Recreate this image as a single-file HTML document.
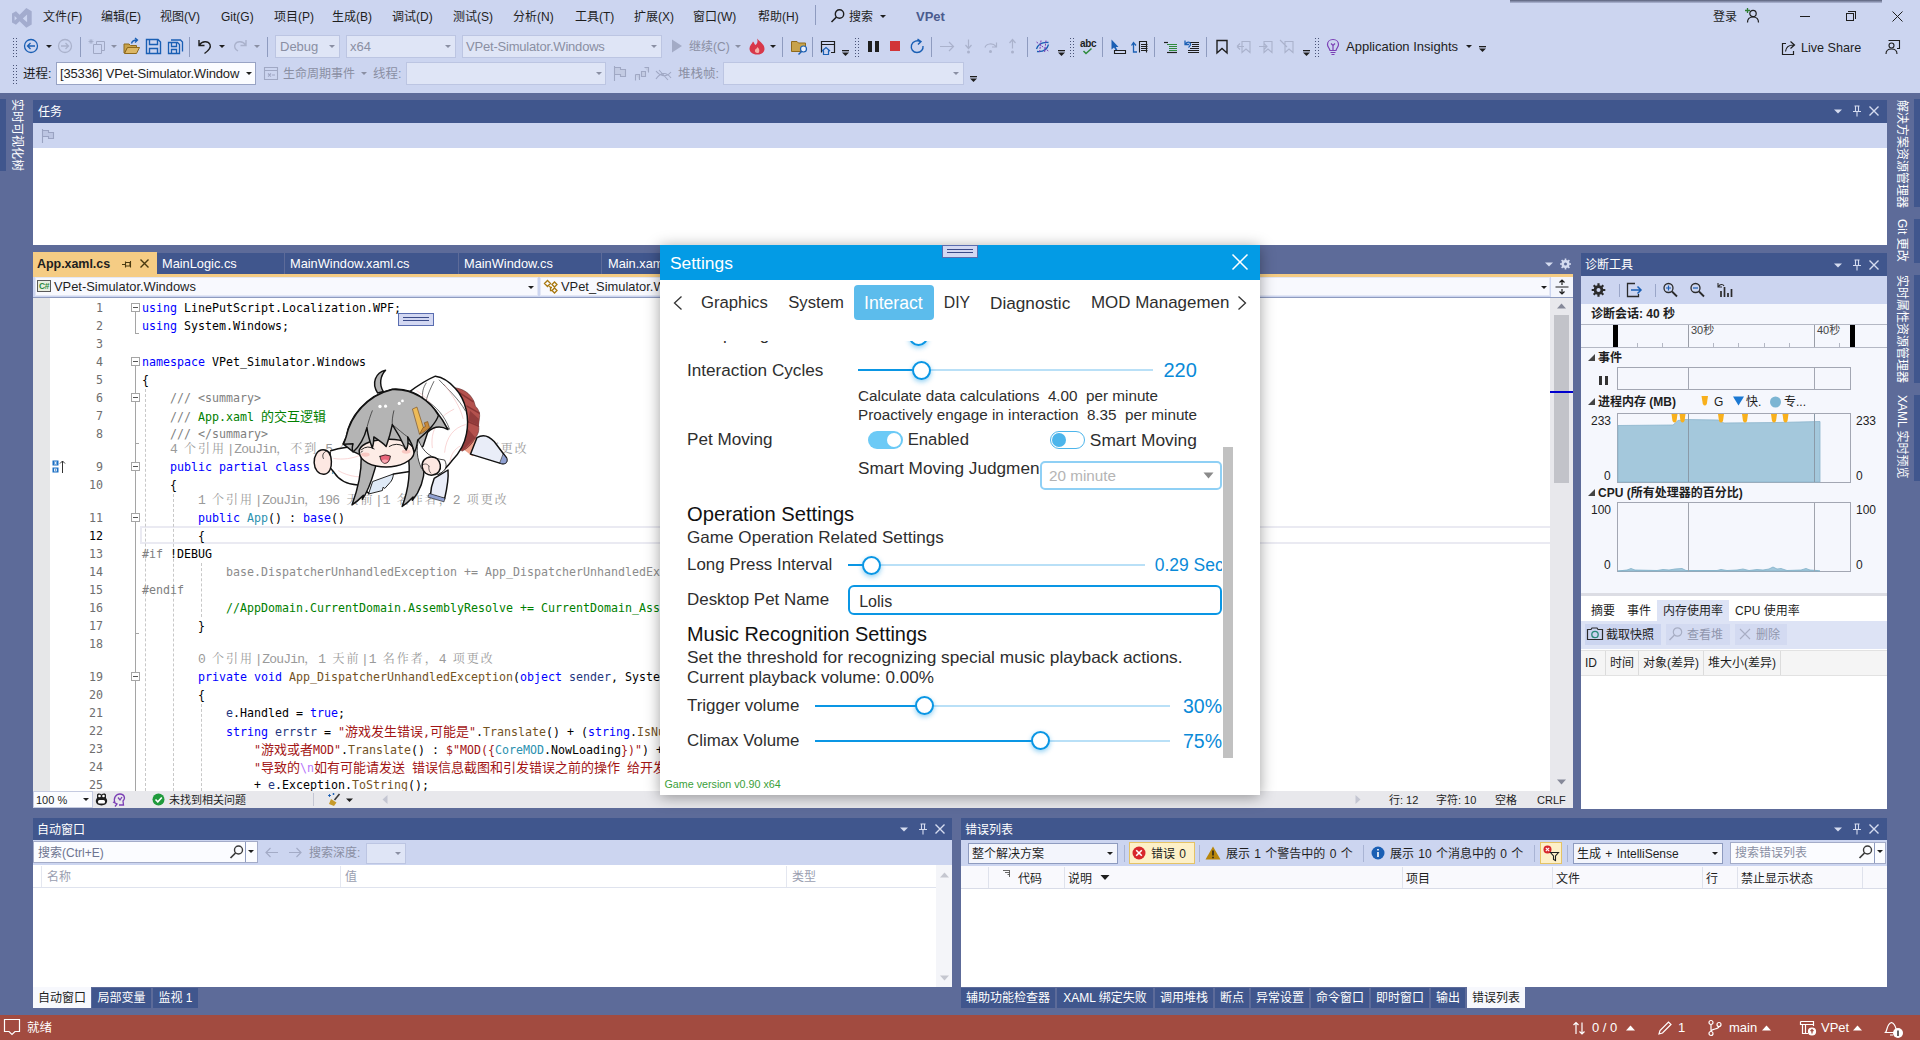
<!DOCTYPE html>
<html lang="zh-CN">
<head>
<meta charset="utf-8">
<title>VPet - Visual Studio</title>
<style>
*{box-sizing:border-box;margin:0;padding:0}
html,body{width:1920px;height:1040px;overflow:hidden}
body{position:relative;background:#5d6b99;font-family:"Liberation Sans","Noto Sans CJK SC",sans-serif;font-size:12px;color:#1e1e1e;line-height:1}
.a{position:absolute}
.t{position:absolute;white-space:nowrap;line-height:16px;height:16px}
.w{color:#fff}
.g{color:#8a8fa3}
/* top chrome */
#chrome{left:0;top:0;width:1920px;height:93px;background:#ccd5f0}
.menu{top:9px;font-size:12px}
.sep{position:absolute;width:1px;background:#8e9bbf}
.combo{position:absolute;background:#f3f5fc;border:1px solid #a9b4d4}
.combo.dis{background:#dfe5f6;border-color:#bcc5e2}
.arr{position:absolute;width:0;height:0;border-left:3px solid transparent;border-right:3px solid transparent;border-top:3px solid #1e1e1e}
.arr.gr{border-top-color:#8a8fa3}
.grip{position:absolute;width:3px;background-image:radial-gradient(circle,#4a5478 0.7px,transparent 0.9px);background-size:3px 3px}
/* panels */
.ttl{position:absolute;background:#40568d;color:#fff;height:22px}
.ttl .t{top:3px;left:5px;color:#fff}
.tb{position:absolute;background:#ccd5f0}
.white{position:absolute;background:#fff}
/* code */
.ln,.cd,.cl{position:absolute;white-space:pre;font-family:"DejaVu Sans Mono","Liberation Mono","Noto Sans CJK SC",monospace;font-size:11.63px;line-height:18px;height:18px}
.ln{left:0;width:70px;text-align:right;color:#2b91af;color:#6e6e6e}
.cd{left:109px;color:#000}
.cl{color:#9a9a9a;font-family:"Liberation Mono","Noto Serif CJK SC",monospace;font-size:13px;letter-spacing:-.8px;line-height:15px;height:15px}
.k{color:#0000ff}.ty{color:#2b91af}.s{color:#a31515}.c{color:#008000}.x{color:#808080}.p{color:#808080}.m{color:#74531f}.e{color:#b776fb}.gy{color:#8c8c8c}
.cd i,.cl i{font-style:normal}.cd b.z{font-weight:normal;font-family:"Noto Sans CJK SC",sans-serif;font-size:13px;letter-spacing:0}.cl b.z{font-weight:normal;font-family:"Noto Serif CJK SC",serif;font-size:12px;letter-spacing:2px}
.cl i.br{margin:0 .65px}
.ob{position:absolute;width:9px;height:9px;border:1px solid #a5a5a5;background:#fff}
.ob:after{content:"";position:absolute;left:1px;top:3px;width:5px;height:1px;background:#555}
.vl{position:absolute;width:1px;background:#a5a5a5}
.dl{position:absolute;width:0;border-left:1px dashed #c8c8c8}
/* tabs bottom */
.bt{position:absolute;top:988px;height:20px;background:#40568d;color:#fff;line-height:20px;text-align:center;white-space:nowrap}
.bt.on{background:#f7f8fd;color:#1e1e1e;top:987px;height:21px;line-height:22px}
/* status */
#status{left:0;top:1015px;width:1920px;height:25px;background:#a24b40;color:#fff}
#status .t{color:#fff;font-size:13px;top:5px}
/* dialog */
#dlg{left:660px;top:245px;width:600px;height:550px;background:#fff;box-shadow:0 2px 14px rgba(0,0,0,.38);font-family:"Liberation Sans",sans-serif;color:#222;overflow:hidden}
#dlg .t{font-size:16.5px;line-height:20px;height:20px;color:#2e2e2e}
#dlg .b{color:#0a8ad8}
.trk{position:absolute;height:2px;background:#b9e0f7}
.trk i{position:absolute;left:0;top:0;height:2px;background:#0a96e4;display:block}
.knob{position:absolute;width:19px;height:19px;border-radius:50%;border:2px solid #0a96e4;background:#fff;box-shadow:0 2px 5px rgba(10,150,228,.45)}
</style>
</head>
<body>
<div id="chrome" class="a">
<!-- VS logo -->
<svg class="a" style="left:0;top:0" width="40" height="32" viewBox="0 0 40 32"><path d="M26.300 8 L31.700 11.200 V24.600 L26.300 27.800 L19.600 21.200 L16 24.800 L12 22.600 V13.400 L16 11.200 L19.600 14.800 Z M27.100 14.600 V22.200 L22.800 18.400 Z M14.600 16 V20.600 L17 18.300 Z" fill="#a3acce" fill-rule="evenodd"/></svg>
<span class="t menu" style="left:43px">文件(F)</span>
<span class="t menu" style="left:101px">编辑(E)</span>
<span class="t menu" style="left:160px">视图(V)</span>
<span class="t menu" style="left:221px">Git(G)</span>
<span class="t menu" style="left:274px">项目(P)</span>
<span class="t menu" style="left:332px">生成(B)</span>
<span class="t menu" style="left:392px">调试(D)</span>
<span class="t menu" style="left:453px">测试(S)</span>
<span class="t menu" style="left:513px">分析(N)</span>
<span class="t menu" style="left:575px">工具(T)</span>
<span class="t menu" style="left:634px">扩展(X)</span>
<span class="t menu" style="left:693px">窗口(W)</span>
<span class="t menu" style="left:758px">帮助(H)</span>
<div class="sep" style="left:815px;top:5px;height:20px"></div>
<svg class="a" style="left:830px;top:8px" width="16" height="16" viewBox="0 0 16 16"><circle cx="9.5" cy="6" r="4.2" fill="none" stroke="#1e1e1e" stroke-width="1.4"/><path d="M6.5 9 L1.5 14" stroke="#1e1e1e" stroke-width="1.6"/></svg>
<span class="t menu" style="left:849px">搜索</span>
<div class="arr" style="left:880px;top:15px"></div>
<span class="t" style="left:916px;top:9px;font-size:13px;font-weight:bold;color:#4a5b8e">VPet</span>
<div class="a" style="left:1510px;top:0;width:372px;height:3px;background:linear-gradient(#59607a,rgba(160,168,200,.6))"></div>
<span class="t menu" style="left:1713px">登录</span>
<svg class="a" style="left:1744px;top:7px" width="17" height="17" viewBox="0 0 17 17"><circle cx="9" cy="6.5" r="3.2" fill="none" stroke="#1e1e1e" stroke-width="1.2"/><path d="M3.5 15.5 C3.5 11 6 10 9 10 C12 10 14.500 11 14.500 15.5" fill="none" stroke="#1e1e1e" stroke-width="1.2"/><path d="M1 3.500 H6 M3.500 1 V6" stroke="#2e7d32" stroke-width="1.3"/></svg>
<div class="a" style="left:1800px;top:16px;width:10px;height:1px;background:#1e1e1e"></div>
<div class="a" style="left:1846px;top:13px;width:8px;height:8px;border:1px solid #1e1e1e"></div>
<div class="a" style="left:1848px;top:11px;width:8px;height:8px;border:1px solid #1e1e1e;border-left:none;border-bottom:none"></div>
<svg class="a" style="left:1892px;top:11px" width="11" height="11" viewBox="0 0 11 11"><path d="M0.500 0.500 L10.500 10.500 M10.500 0.500 L0.500 10.500" stroke="#1e1e1e" stroke-width="1"/></svg>
<div class="grip" style="left:12px;top:37px;height:20px;width:5px"></div>
<div class="grip" style="left:12px;top:64px;height:20px;width:5px"></div>
<div class="grip" style="left:854px;top:37px;height:20px;width:5px"></div>
<div class="grip" style="left:1069px;top:37px;height:20px;width:5px"></div>
<div class="grip" style="left:1314px;top:37px;height:20px;width:5px"></div>
<div class="sep" style="left:80px;top:37px;height:20px"></div>
<div class="sep" style="left:189px;top:37px;height:20px"></div>
<div class="sep" style="left:267px;top:37px;height:20px"></div>
<div class="sep" style="left:782px;top:37px;height:20px"></div>
<div class="sep" style="left:812px;top:37px;height:20px"></div>
<div class="sep" style="left:931px;top:37px;height:20px"></div>
<div class="sep" style="left:1027px;top:37px;height:20px"></div>
<div class="sep" style="left:1102px;top:37px;height:20px"></div>
<div class="sep" style="left:1154px;top:37px;height:20px"></div>
<div class="sep" style="left:1206px;top:37px;height:20px"></div>
<div class="combo dis" style="left:275px;top:35px;width:65px;height:23px"></div>
<span class="t g" style="left:280px;top:39px;font-size:13px">Debug</span><div class="arr gr" style="left:329px;top:45px"></div>
<div class="combo dis" style="left:346px;top:35px;width:110px;height:23px"></div>
<span class="t g" style="left:350px;top:39px;font-size:13px">x64</span><div class="arr gr" style="left:445px;top:45px"></div>
<div class="combo dis" style="left:462px;top:35px;width:200px;height:23px"></div>
<span class="t g" style="left:466px;top:39px;font-size:13px;letter-spacing:-.2px">VPet-Simulator.Windows</span><div class="arr gr" style="left:651px;top:45px"></div>
<span class="t g" style="left:689px;top:39px;font-size:12px">继续(C)</span><div class="arr gr" style="left:735px;top:45px"></div>
<div class="arr" style="left:46px;top:45px"></div>
<div class="arr gr" style="left:111px;top:45px"></div>
<div class="arr" style="left:219px;top:45px"></div>
<div class="arr gr" style="left:254px;top:45px"></div>
<div class="arr" style="left:770px;top:45px"></div>
<span class="t" style="left:1346px;top:39px;font-size:13px">Application Insights</span><div class="arr" style="left:1466px;top:45px"></div>
<span class="t" style="left:1801px;top:40px;font-size:12.6px">Live Share</span>
<svg class="a" style="left:0;top:30px" width="1920" height="63" viewBox="0 30 1920 63" fill="none" stroke-linecap="butt">
<!-- back / forward -->
<circle cx="31" cy="46" r="6.500" stroke="#1a5fb4" stroke-width="1.3"/><path d="M35 46 H27.500 M30.500 43 L27.500 46 L30.500 49" stroke="#1a5fb4" stroke-width="1.3"/>
<circle cx="65" cy="46" r="6.500" stroke="#aab2cc" stroke-width="1.3"/><path d="M61 46 H68.500 M65.500 43 L68.500 46 L65.500 49" stroke="#aab2cc" stroke-width="1.3"/>
<!-- new item gray -->
<path d="M93.500 44.500 H101.500 V53.500 H93.500 Z M96.500 44 V41.500 H104.500 V50.500 H102" stroke="#a0a8c4" stroke-width="1"/><path d="M91 39 V44 M88.500 41.500 H93.500 M89.300 39.700 L92.700 43.300 M92.700 39.700 L89.300 43.300" stroke="#a0a8c4" stroke-width=".8"/>
<!-- open folder -->
<path d="M124 44 H129 L130.500 45.500 H136.500 V47.500 H127.500 L124.500 53 H124 Z" fill="#c8a24a" stroke="#8f6a1c" stroke-width="1"/><path d="M127.500 47.500 H139.500 L136.500 53.500 H124.500 Z" fill="#dcb765" stroke="#8f6a1c" stroke-width="1"/><path d="M131.500 43.500 C132 41 134 40 137 40 M135 38 L137.500 40 L135 42.500" stroke="#1a5fb4" stroke-width="1.3"/>
<!-- save -->
<path d="M146.500 39.500 H158 L160.500 42 V53.500 H146.500 Z M149.500 39.500 V44.500 H157.500 V39.500 M149.500 53.500 V48.500 H157.500 V53.500" stroke="#1a5fb4" stroke-width="1.4"/>
<!-- save all -->
<path d="M168.500 42.500 H177.500 L179.500 44.500 V53.500 H168.500 Z M171.500 42.500 V46.500 H176.500 V42.500 M171.500 53.500 V49.500 H176.500 V53.500" stroke="#1a5fb4" stroke-width="1.3"/><path d="M171 40 H180.500 L182.500 42 V51.500" stroke="#1a5fb4" stroke-width="1.3"/>
<!-- undo / redo -->
<path d="M199 40 V45.500 H204.500 M199.500 45 C202 41 208 40.500 210 44.500 C211.500 48 208 51 204.500 53.500" stroke="#1e1e1e" stroke-width="1.4"/>
<path d="M246 40 V45.500 H240.500 M245.500 45 C243 41 237 40.500 235 44.500 C234 47 235.500 49.500 238 51" stroke="#aab2cc" stroke-width="1.4"/>
<!-- play -->
<path d="M672 39.500 L682 46 L672 52.500 Z" fill="#a3abc6"/>
<!-- fire -->
<path d="M757 38.500 C760 42 764.500 44 764.500 49 C764.500 52.500 761 54.500 757 54.500 C752.500 54.500 749.500 52 749.500 48.500 C749.500 45.500 752 44 753 41.500 C754.500 43 754.500 44.500 755.500 45 C757.500 43.500 758 41 757 38.500 Z" fill="#d8384a"/><path d="M757.500 47 C759.500 49 760 51 758.500 53 C756 53.500 754.500 52 755 50 C755.500 49 757 48.500 757.500 47 Z" fill="#f6b0a8"/>
<!-- folder search -->
<path d="M791.500 41.500 H797 L798.500 43 H805.500 V51.500 H791.500 Z" fill="#c8a24a" stroke="#8f6a1c" stroke-width="1"/><circle cx="803.500" cy="49" r="3" fill="#e9eefb" stroke="#1a5fb4" stroke-width="1.2"/><path d="M801.500 51.500 L798.500 54.500" stroke="#1a5fb4" stroke-width="1.4"/>
<!-- window icon -->
<path d="M821.500 52.500 V41.500 H834.500 V52.500 H831 M821.500 44.500 H834.500" stroke="#1e1e1e" stroke-width="1.2"/><path d="M822 51 L826 47.500 L830 51 M823.500 50.500 V54.500 H828.500 V50.500" stroke="#1a5fb4" stroke-width="1.2"/>
<!-- overflows -->
<g fill="#1e1e1e"><rect x="842" y="50" width="7" height="1.300"/><path d="M842 52.500 H849 L845.500 56 Z"/>
<rect x="1058" y="50" width="7" height="1.300"/><path d="M1058 52.500 H1065 L1061.500 56 Z"/>
<rect x="1303" y="50" width="7" height="1.300"/><path d="M1303 52.500 H1310 L1306.500 56 Z"/>
<rect x="1479" y="46" width="7" height="1.300"/><path d="M1479 48.500 H1486 L1482.500 52 Z"/>
<rect x="970" y="76" width="7" height="1.300"/><path d="M970 78.500 H977 L973.500 82 Z"/></g>
<!-- pause stop restart -->
<rect x="868" y="41" width="4" height="11" fill="#1e1e1e"/><rect x="875" y="41" width="4" height="11" fill="#1e1e1e"/>
<rect x="890" y="41" width="10" height="10" fill="#d13438"/>
<path d="M920.500 41.500 C917.500 40 913 41 911.500 45 C910.500 49 913 52.500 917 52.500 C921 52.500 923.500 49.500 923 46 M917.500 39 L921 41.500 L918 44.500" stroke="#1a5fb4" stroke-width="1.4"/>
<!-- step gray -->
<g stroke="#aab2cc" stroke-width="1.2"><path d="M940 46.500 H953.500 M949 42 L953.500 46.500 L949 51"/><path d="M968.500 39.500 V48 M965.500 45 L968.500 48.500 L971.500 45"/><path d="M985 47.500 C986 43.500 993 42.500 996 46.500 M996.500 42.500 V47 H992"/><path d="M1012.500 48.500 V40 M1009.500 43 L1012.500 39.500 L1015.500 43"/></g>
<g fill="#aab2cc"><circle cx="968.500" cy="52" r="1.500"/><circle cx="990.500" cy="51.500" r="1.500"/><circle cx="1012.500" cy="52" r="1.500"/></g>
<!-- intellitrace-ish icon -->
<path d="M1036.500 49 C1038.500 43 1043 42 1048.500 42.500 M1037 51.500 C1042 52 1047 50 1048.500 44.500" stroke="#1a5fb4" stroke-width="1.300"/><path d="M1036.500 42 L1049 51.500 M1041 40.500 L1039.500 53 M1046 40.500 L1044.500 53" stroke="#7b3fb5" stroke-width="1" stroke-dasharray="2 1.200"/>
<!-- abc check -->
<path d="M1083.500 51 L1086 53.500 L1091.500 48.500" stroke="#2e8b3c" stroke-width="1.5"/>
<!-- cursor w/ box -->
<path d="M1111.500 39.500 V49.500 L1114 47.500 L1116 51 L1117.500 50.300 L1115.800 47 H1118.500 Z" fill="#1a5fb4"/><path d="M1114.500 50.500 H1125.500 V53.500 H1114.500 Z" stroke="#1e1e1e" stroke-width="1.100"/>
<!-- doc arrows -->
<path d="M1139.500 52.500 V41.500 H1146.500 V52.500 M1141 44.500 H1147.500 M1141 46.500 H1147.500 M1141 48.500 H1147.500 M1141 50.500 H1147.500" stroke="#1e1e1e" stroke-width="1.100"/><path d="M1137 52 H1133.500 V43.500 M1131.500 45.500 L1133.500 42.500 L1136 45.500" stroke="#1a5fb4" stroke-width="1.300"/>
<!-- indent -->
<path d="M1164 42.500 H1168" stroke="#1e1e1e" stroke-width="1.200"/><path d="M1167 44.500 H1177 M1169 46.500 H1177 M1169 48.500 H1177 M1169 50.500 H1177" stroke="#2e8b3c" stroke-width="1.200"/><path d="M1167 52.500 H1177" stroke="#1e1e1e" stroke-width="1.200"/>
<path d="M1190 42.500 H1199 M1192 44.500 H1199 M1192 46.500 H1199 M1190 48.500 H1199 M1188 50.500 H1199 M1188 52.500 H1199" stroke="#1e1e1e" stroke-width="1.100"/><path d="M1185 40.500 V44.500 H1189 M1185.500 44 C1187 41.500 1190 41.500 1190.500 44 C1190.800 45.500 1189.500 46.500 1188.500 47.500" stroke="#1a5fb4" stroke-width="1.300"/>
<!-- bookmarks -->
<path d="M1217 40.500 H1227 V53 L1222 48.500 L1217 53 Z" stroke="#1e1e1e" stroke-width="1.400"/>
<g stroke="#aab2cc" stroke-width="1.100"><path d="M1242 41.500 H1250 V52.500 L1246 49 L1242 52.500 Z M1237 46.500 L1240 43.500 M1237 46.500 L1240 49.500 M1237 46.500 H1244"/><path d="M1264 41.500 H1272 V52.500 L1268 49 L1264 52.500 Z M1259 46.500 H1267 M1264 43.500 L1267 46.500 L1264 49.500"/><path d="M1285 41.500 H1293 V52.500 L1289 49 L1285 52.500 Z M1280 40 L1287 47"/></g>
<!-- bulb -->
<path d="M1333 39.500 C1336.500 39.500 1338.500 42 1338.500 44.500 C1338.500 47 1336.500 48 1336 50.500 H1330 C1329.500 48 1327.500 47 1327.500 44.500 C1327.500 42 1329.500 39.500 1333 39.500 Z M1330.500 52.500 H1335.500 M1331.500 54.500 H1334.500 M1333 50 V45 M1331 43.500 L1333 45.500 L1335 43.500" stroke="#7b3fb5" stroke-width="1.200"/>
<!-- live share -->
<path d="M1786 43.500 H1782.500 V54.500 H1793.500 V51" stroke="#1e1e1e" stroke-width="1.200"/><path d="M1785.500 51.500 C1786 47 1789 45 1793.500 45 M1790.500 41.500 L1794.500 45 L1790.500 48.500" stroke="#1e1e1e" stroke-width="1.200"/>
<!-- feedback -->
<path d="M1888.500 40.500 H1899.500 V48.500 H1897" stroke="#1e1e1e" stroke-width="1.100"/><circle cx="1891.500" cy="45.500" r="2.500" stroke="#1e1e1e" stroke-width="1.100"/><path d="M1886 54 C1886 50 1888.500 49 1891.500 49 C1894.500 49 1897 50 1897 54" stroke="#1e1e1e" stroke-width="1.100"/>
<!-- row2 icons -->
<g stroke="#a0a8c4" stroke-width="1.100"><path d="M264.500 67.500 H277.500 V79.500 H264.500 Z M264.500 70.500 H277.500 M268 76.500 L271 73.500 M268 73.500 L271 76.500 M272 75 H275"/>
<path d="M614.500 66 V81 M614.500 67.500 H620.500 V69.500 H625.500 V76.500 H620.500 V74.500 H614.500" fill="#c3cbe3"/>
<path d="M635.500 74.500 H639.500 V80 M635.500 74.500 V80.500 M641.500 71.500 H645.500 V76.500 H641.500 Z M644.500 67.500 H648.500 V72.500" fill="#c3cbe3"/>
<path d="M656 71 C660 76 666 78 671 72 M656 79 C660 73 666 71 671 78 M659 70 L668 80"/></g>
</svg>
<span class="t" style="left:1080px;top:36px;font-size:10px;font-weight:bold;letter-spacing:-.3px">abc</span>

<span class="t" style="left:23px;top:66px;font-size:12.5px">进程:</span>
<div class="combo" style="left:56px;top:62px;width:200px;height:23px;background:#fbfcff;border-color:#98a3c4"></div>
<span class="t" style="left:60px;top:66px;font-size:13px;letter-spacing:-.15px">[35336] VPet-Simulator.Window</span><div class="arr" style="left:246px;top:72px"></div>
<span class="t g" style="left:283px;top:66px;font-size:12px">生命周期事件</span><div class="arr gr" style="left:361px;top:72px"></div>
<span class="t g" style="left:373px;top:66px;font-size:12.5px">线程:</span>
<div class="combo dis" style="left:406px;top:62px;width:200px;height:23px"></div><div class="arr gr" style="left:596px;top:72px"></div>
<span class="t g" style="left:678px;top:66px;font-size:12.5px">堆栈帧:</span>
<div class="combo dis" style="left:723px;top:62px;width:241px;height:23px"></div><div class="arr gr" style="left:953px;top:72px"></div>

</div>

<div class="a" style="left:0;top:99px;width:6px;height:72px;background:#40568d"></div>
<div class="a w" style="left:10px;top:99px;width:14px;height:80px;writing-mode:vertical-rl;text-orientation:sideways;font-size:12px;line-height:14px;white-space:nowrap">实时可视化树</div>
<div class="a" style="left:1914px;top:99px;width:6px;height:108px;background:#40568d"></div>
<div class="a" style="left:1914px;top:219px;width:6px;height:44px;background:#40568d"></div>
<div class="a" style="left:1914px;top:275px;width:6px;height:108px;background:#40568d"></div>
<div class="a" style="left:1914px;top:395px;width:6px;height:86px;background:#40568d"></div>
<div class="a w" style="left:1895px;top:100px;width:14px;height:120px;writing-mode:vertical-rl;text-orientation:sideways;font-size:12px;line-height:14px;white-space:nowrap">解决方案资源管理器</div>
<div class="a w" style="left:1895px;top:219px;width:14px;height:60px;writing-mode:vertical-rl;text-orientation:sideways;font-size:12px;line-height:14px;white-space:nowrap">Git 更改</div>
<div class="a w" style="left:1895px;top:275px;width:14px;height:120px;writing-mode:vertical-rl;text-orientation:sideways;font-size:12px;line-height:14px;white-space:nowrap">实时属性资源管理器</div>
<div class="a w" style="left:1895px;top:395px;width:14px;height:100px;writing-mode:vertical-rl;text-orientation:sideways;font-size:12px;line-height:14px;white-space:nowrap">XAML 实时预览</div>

<div class="ttl" style="left:33px;top:100px;width:1854px;height:23px"><span class="t" style="font-size:12px;top:4px">任务</span></div>
<svg class="a" style="left:1830px;top:100px" width="57" height="22" viewBox="0 0 57 22"><path d="M4 9.500 H12 L8 13.500 Z" fill="#d5dcf0"/><path d="M24.500 6 H29.500 M25.500 6 V11.500 M28.500 6 V11.500 M23 11.500 H31 M27 11.500 V16.500" stroke="#d5dcf0" stroke-width="1.1" fill="none"/><path d="M39.500 6.500 L48.500 15.500 M48.500 6.500 L39.500 15.500" stroke="#d5dcf0" stroke-width="1.4"/></svg>
<div class="tb" style="left:33px;top:123px;width:1854px;height:25px"></div>
<svg class="a" style="left:40px;top:128px" width="16" height="16" viewBox="0 0 16 16"><path d="M2.500 1 V15 M2.500 2.500 H8.500 V4.500 H13.500 V10.500 H8.500 V8.500 H2.500" stroke="#9aa3c2" stroke-width="1.1" fill="#bcc5e2"/></svg>
<div class="white" style="left:33px;top:148px;width:1854px;height:97px"></div>

<div class="a" style="left:33px;top:252px;width:1540px;height:22px;background:#5d6b99"></div>
<div class="a" style="left:33px;top:252px;width:124px;height:24px;background:#f5cc84"></div>
<span class="t" style="left:37px;top:256px;font-size:12.5px;font-weight:bold;letter-spacing:-.05px;color:#1e1e1e">App.xaml.cs</span>
<svg class="a" style="left:120px;top:257px" width="34" height="14" viewBox="0 0 34 14"><path d="M2 7.500 H5.500 M5.500 4.500 V10.500 M5.500 5.500 H10 V9 H5.500 M10.500 4 V10.500" stroke="#4a3a10" stroke-width="1.1" fill="none"/><path d="M20.500 2.500 L28.500 10.500 M28.500 2.500 L20.500 10.500" stroke="#4a3a10" stroke-width="1.4"/></svg>
<div class="a" style="left:157px;top:253px;width:127px;height:21px;background:#40568d"></div>
<span class="t w" style="left:162px;top:255.500px;font-size:12.8px">MainLogic.cs</span>
<div class="a" style="left:285px;top:253px;width:173px;height:21px;background:#40568d"></div>
<span class="t w" style="left:290px;top:255.500px;font-size:12.8px">MainWindow.xaml.cs</span>
<div class="a" style="left:459px;top:253px;width:142px;height:21px;background:#40568d"></div>
<span class="t w" style="left:464px;top:255.500px;font-size:12.8px">MainWindow.cs</span>
<div class="a" style="left:602px;top:253px;width:69px;height:21px;background:#40568d"></div>
<span class="t w" style="left:608px;top:255.500px;font-size:12.8px">Main.xaml.cs</span>
<div class="a" style="left:33px;top:274px;width:1540px;height:3px;background:#f5cc84"></div>
<svg class="a" style="left:1543px;top:257px" width="30" height="14" viewBox="0 0 30 14"><path d="M2 5.500 H10 L6 9.500 Z" fill="#d5dcf0"/><g transform="translate(22.500 7)" fill="none" stroke="#d5dcf0"><circle r="3" stroke-width="2"/><path d="M0 -5.500 V5.500 M-5.500 0 H5.500 M-3.900 -3.900 L3.900 3.900 M-3.900 3.900 L3.900 -3.900" stroke-width="1.6"/></g><circle cx="22.500" cy="7" r="1.500" fill="#5d6b99"/></svg>
<div class="a" style="left:33px;top:277px;width:1540px;height:21px;background:#ccd5f0;border-bottom:1px solid #8e9bbf"></div>
<div class="a" style="left:35px;top:277px;width:503px;height:19px;background:#f8f9fe;border:1px solid #e3e7f5"></div>
<div class="a" style="left:540px;top:277px;width:503px;height:19px;background:#f8f9fe;border:1px solid #e3e7f5"></div>
<div class="a" style="left:1045px;top:277px;width:505px;height:19px;background:#f8f9fe;border:1px solid #e3e7f5"></div>
<div class="a" style="left:1551px;top:277px;width:22px;height:20px;background:#f3f5fc"></div>
<svg class="a" style="left:1554px;top:279px" width="16" height="16" viewBox="0 0 16 16"><path d="M1.500 8 H14.500 M8 1 V6 M8 10 V15 M5.500 3.500 L8 1 L10.500 3.500 M5.500 12.500 L8 15 L10.500 12.500" stroke="#1e1e1e" stroke-width="1.2" fill="none"/></svg>
<div class="a" style="left:37px;top:280px;width:14px;height:12px;border:1px solid #5a5a5a;background:#e8eee0"></div><span class="t" style="left:39px;top:278px;font-size:8.5px;font-weight:bold;color:#2e8b3c;letter-spacing:-.5px">C#</span>
<span class="t" style="left:54px;top:279px;font-size:12.9px">VPet-Simulator.Windows</span><div class="arr" style="left:528px;top:286px"></div>
<svg class="a" style="left:543px;top:279px" width="16" height="16" viewBox="0 0 16 16"><path d="M1.500 4.500 L4.500 1.500 L7.500 4.500 L4.500 7.500 Z M9 5.500 L11.500 3 L14 5.500 L11.500 8 Z M9 11.500 L11.500 9 L14 11.500 L11.500 14 Z M5.500 5.500 L7.500 8.500 L9 8.500 M7.500 8.500 V11.500 H9" stroke="#a8780f" stroke-width="1.300" fill="none"/></svg>
<span class="t" style="left:561px;top:279px;font-size:12.9px">VPet_Simulator.Windows.App</span><div class="arr" style="left:1033px;top:286px"></div><div class="arr" style="left:1541px;top:286px"></div>
<div id="code" class="a" style="left:33px;top:298px;width:1517px;height:493px;background:#fff;overflow:hidden">
<div class="a" style="left:0;top:0;width:17px;height:493px;background:#e6e7e8"></div>
<div class="a" style="left:107px;top:228px;width:1424px;height:18px;border:2px solid #eaeaf2"></div>
<div class="ob" style="left:98px;top:5px"></div>
<div class="ob" style="left:98px;top:59px"></div>
<div class="ob" style="left:98px;top:95px"></div>
<div class="ob" style="left:98px;top:164px"></div>
<div class="ob" style="left:98px;top:215px"></div>
<div class="ob" style="left:98px;top:374px"></div>
<div class="vl" style="left:102px;top:14px;height:21px"></div>
<div class="a" style="left:102px;top:35px;width:4px;height:1px;background:#a5a5a5"></div>
<div class="vl" style="left:102px;top:68px;height:27px"></div>
<div class="vl" style="left:102px;top:104px;height:60px"></div>
<div class="a" style="left:102px;top:145px;width:4px;height:1px;background:#a5a5a5"></div>
<div class="vl" style="left:102px;top:173px;height:42px"></div>
<div class="vl" style="left:102px;top:224px;height:150px"></div>
<div class="a" style="left:102px;top:335px;width:4px;height:1px;background:#a5a5a5"></div>
<div class="vl" style="left:102px;top:383px;height:110px"></div>
<div class="dl" style="left:112px;top:91px;height:402px"></div>
<div class="dl" style="left:140px;top:196px;height:297px"></div>
<div class="dl" style="left:168px;top:265px;height:54px"></div>
<div class="dl" style="left:168px;top:406px;height:87px"></div>
<span class="ln" style="top:1px">1</span>
<span class="cd" style="top:1px"><i class="k">using</i> LinePutScript.Localization.WPF;</span>
<span class="ln" style="top:19px">2</span>
<span class="cd" style="top:19px"><i class="k">using</i> System.Windows;</span>
<span class="ln" style="top:37px">3</span>
<span class="cd" style="top:37px"></span>
<span class="ln" style="top:55px">4</span>
<span class="cd" style="top:55px"><i class="k">namespace</i> VPet_Simulator.Windows</span>
<span class="ln" style="top:73px">5</span>
<span class="cd" style="top:73px">{</span>
<span class="ln" style="top:91px">6</span>
<span class="cd" style="top:91px">    <i class="x">/// &lt;summary&gt;</i></span>
<span class="ln" style="top:109px">7</span>
<span class="cd" style="top:109px">    <i class="x">/// </i><i class="c">App.xaml <b class="z">的交互逻辑</b></i></span>
<span class="ln" style="top:127px">8</span>
<span class="cd" style="top:127px">    <i class="x">/// &lt;/summary&gt;</i></span>
<span class="cl" style="top:142px;left:137px">4 <b class="z">个引用</b><i class="br">|</i>ZouJin<b class="z">，不到</b> 5 <b class="z">分钟前</b><i class="br">|</i>1 <b class="z">名作者，</b><i style="margin-left:13px">2 </i><b class="z">项更改</b></span>
<span class="ln" style="top:160px">9</span>
<span class="cd" style="top:160px">    <i class="k">public partial class</i> <i class="ty">App</i> : <i class="ty">Application</i></span>
<span class="ln" style="top:178px">10</span>
<span class="cd" style="top:178px">    {</span>
<span class="cl" style="top:193px;left:165px">1 <b class="z">个引用</b><i class="br">|</i>ZouJin<b class="z">，</b>196 <b class="z">天前</b><i class="br">|</i>1 <b class="z">名作者，</b>2 <b class="z">项更改</b></span>
<span class="ln" style="top:211px">11</span>
<span class="cd" style="top:211px">        <i class="k">public</i> <i class="ty">App</i>() : <i class="k">base</i>()</span>
<span class="ln" style="top:229px;color:#000">12</span>
<span class="cd" style="top:229px">        {</span>
<span class="ln" style="top:247px">13</span>
<span class="cd" style="top:247px"><i class="x">#if</i> !DEBUG</span>
<span class="ln" style="top:265px">14</span>
<span class="cd" style="top:265px">            <i class="gy">base.DispatcherUnhandledException += App_DispatcherUnhandledException;</i></span>
<span class="ln" style="top:283px">15</span>
<span class="cd" style="top:283px"><i class="x">#endif</i></span>
<span class="ln" style="top:301px">16</span>
<span class="cd" style="top:301px">            <i class="c">//AppDomain.CurrentDomain.AssemblyResolve += CurrentDomain_AssemblyResolve;</i></span>
<span class="ln" style="top:319px">17</span>
<span class="cd" style="top:319px">        }</span>
<span class="ln" style="top:337px">18</span>
<span class="cd" style="top:337px"></span>
<span class="cl" style="top:352px;left:165px">0 <b class="z">个引用</b><i class="br">|</i>ZouJin<b class="z">，</b>1 <b class="z">天前</b><i class="br">|</i>1 <b class="z">名作者，</b>4 <b class="z">项更改</b></span>
<span class="ln" style="top:370px">19</span>
<span class="cd" style="top:370px">        <i class="k">private void</i> <i class="m">App_DispatcherUnhandledException</i>(<i class="k">object</i> <i style="color:#1f377f">sender</i>, System.Windows.Threading.DispatcherUnhandledExceptionEventArgs e)</span>
<span class="ln" style="top:388px">20</span>
<span class="cd" style="top:388px">        {</span>
<span class="ln" style="top:406px">21</span>
<span class="cd" style="top:406px">            <i style="color:#1f377f">e</i>.Handled = <i class="k">true</i>;</span>
<span class="ln" style="top:424px">22</span>
<span class="cd" style="top:424px">            <i class="k">string</i> <i style="color:#1f377f">errstr</i> = <i class="s">"<b class="z">游戏发生错误</b>,<b class="z">可能是</b>"</i>.<i class="m">Translate</i>() + (<i class="k">string</i>.<i class="m">IsNullOrWhiteSpace</i>(CoreMOD.NowLoading) ?</span>
<span class="ln" style="top:442px">23</span>
<span class="cd" style="top:442px">                <i class="s">"<b class="z">游戏或者</b>MOD"</i>.<i class="m">Translate</i>() : <i class="s">$"MOD({</i><i class="ty">CoreMOD</i>.NowLoading<i class="s">})"</i>) +</span>
<span class="ln" style="top:460px">24</span>
<span class="cd" style="top:460px">                <i class="s">"<b class="z">导致的</b></i><i class="e">\n</i><i class="s"><b class="z">如有可能请发送</b> <b class="z">错误信息截图和引发错误之前的操作</b> <b class="z">给开发者</b>"</i></span>
<span class="ln" style="top:478px">25</span>
<span class="cd" style="top:478px">                + <i style="color:#1f377f">e</i>.Exception.<i class="m">ToString</i>();</span>
<svg class="a" style="left:18px;top:161px" width="16" height="16" viewBox="0 0 16 16"><rect x="1.500" y="1.500" width="6" height="5" fill="#1a6fc4"/><rect x="1.500" y="8.500" width="6" height="5" fill="#1a6fc4"/><path d="M3 3 H6 M4.500 3 V5 M3 5 H6" stroke="#fff" stroke-width=".8"/><rect x="3.500" y="10" width="2" height="2" fill="none" stroke="#fff" stroke-width=".8"/><path d="M11.500 14 V2 M9 4.500 L11.500 2 L14 4.500" stroke="#333" stroke-width="1" fill="none"/></svg>
</div>
<div class="a" style="left:1550px;top:298px;width:23px;height:493px;background:#e8e8ec"></div>
<div class="a" style="left:1554px;top:315px;width:15px;height:168px;background:#c2c3c9"></div>
<div class="a" style="left:1550px;top:391px;width:23px;height:2px;background:#0000cd"></div>
<svg class="a" style="left:1556px;top:302px" width="11" height="8" viewBox="0 0 11 8"><path d="M1 6.500 H10 L5.500 1.500 Z" fill="#868999"/></svg>
<svg class="a" style="left:1556px;top:778px" width="11" height="8" viewBox="0 0 11 8"><path d="M1 1.500 H10 L5.500 6.500 Z" fill="#868999"/></svg>
<div class="a" style="left:33px;top:791px;width:1540px;height:17px;background:#e8e8ec"></div>
<div class="a" style="left:33px;top:791px;width:60px;height:17px;background:#fbfcff;border:1px solid #c4cae0"></div><span class="t" style="left:36px;top:792px;font-size:11px">100 %</span><div class="arr" style="left:83px;top:798px"></div>
<svg class="a" style="left:94px;top:792px" width="34" height="16" viewBox="0 0 34 16"><path d="M3 3 C3 1 6 1 7.500 2.500 C9 1 12 1 12 3 V6 C14 8 14 13 7.500 13.500 C1 13 1 8 3 6 Z" fill="#1e1e1e"/><circle cx="5.500" cy="4" r="1.300" fill="#fff"/><circle cx="9.500" cy="4" r="1.300" fill="#fff"/><rect x="4" y="8" width="7" height="3.500" rx="1.500" fill="#fff"/><path d="M21 11 C19 6 22 2 26 2 C30 2 32 6 29 9 L29.500 13 H25 M19 10 L23 12 L21 14.500 M24 5.500 L26 8 L28 5" stroke="#7b3fb5" stroke-width="1.300" fill="none"/></svg>
<svg class="a" style="left:152px;top:793px" width="13" height="13" viewBox="0 0 13 13"><circle cx="6.500" cy="6.500" r="6" fill="#1f9a3c"/><path d="M3.500 6.500 L5.800 8.800 L9.800 4.500" stroke="#fff" stroke-width="1.600" fill="none"/></svg>
<span class="t" style="left:169px;top:792px;font-size:11px">未找到相关问题</span>
<div class="a" style="left:313px;top:793px;width:1px;height:13px;background:#c4c6d2"></div>
<svg class="a" style="left:327px;top:792px" width="28" height="16" viewBox="0 0 28 16"><path d="M12.500 2 L7.500 8" stroke="#3a3a3a" stroke-width="1.600"/><path d="M4 7 L9.500 10.500 L7 14 L2 12 Z" fill="#c79a2a"/><path d="M2.500 2 V5 M1 3.500 H4 M6.500 1 V3 M5.500 2 H7.500" stroke="#1a5fb4" stroke-width=".9"/><path d="M19 6.500 H26 L22.500 10 Z" fill="#1e1e1e"/></svg>
<svg class="a" style="left:1354px;top:794px" width="8" height="11" viewBox="0 0 8 11"><path d="M1.500 1 V10 L6.500 5.500 Z" fill="#c4c6d2"/></svg>
<svg class="a" style="left:381px;top:794px" width="8" height="11" viewBox="0 0 8 11"><path d="M6.500 1 V10 L1.500 5.500 Z" fill="#c4c6d2"/></svg>
<span class="t" style="left:1389px;top:792px;font-size:11px">行: 12</span>
<span class="t" style="left:1436px;top:792px;font-size:11px">字符: 10</span>
<span class="t" style="left:1495px;top:792px;font-size:11px">空格</span>
<span class="t" style="left:1537px;top:792px;font-size:11px">CRLF</span>

<div class="ttl" style="left:1581px;top:253px;width:306px;height:23px"><span class="t" style="font-size:12px;top:4px;left:4px">诊断工具</span></div>
<svg class="a" style="left:1830px;top:254px" width="57" height="22" viewBox="0 0 57 22"><path d="M4 9.500 H12 L8 13.500 Z" fill="#d5dcf0"/><path d="M24.500 6 H29.500 M25.500 6 V11.500 M28.500 6 V11.500 M23 11.500 H31 M27 11.500 V16.500" stroke="#d5dcf0" stroke-width="1.1" fill="none"/><path d="M39.500 6.500 L48.500 15.500 M48.500 6.500 L39.500 15.500" stroke="#d5dcf0" stroke-width="1.4"/></svg>
<div class="tb" style="left:1581px;top:276px;width:306px;height:28px"></div>
<svg class="a" style="left:1581px;top:275px" width="306" height="29" viewBox="0 0 306 29" fill="none">
<g transform="translate(17.500 15)" stroke="#2b2b2b"><circle r="3.600" stroke-width="2.400"/><path d="M0 -6.800 V6.800 M-6.800 0 H6.800 M-4.800 -4.800 L4.800 4.800 M-4.800 4.800 L4.800 -4.800" stroke-width="2.200"/></g><circle cx="17.500" cy="15" r="2" fill="#ccd5f0"/>
<path d="M38.500 9 V22" stroke="#9aa6c8"/><path d="M74.500 9 V22" stroke="#9aa6c8"/>
<path d="M54 8.500 H46.500 V21.500 H57.500 V19" stroke="#2b2b2b" stroke-width="1.300"/><path d="M50 15 H60 M56.500 11.500 L60 15 L56.500 18.500" stroke="#1a5fb4" stroke-width="1.500"/>
<circle cx="87.500" cy="13" r="4.500" stroke="#2b2b2b" stroke-width="1.300"/><path d="M91 16.500 L96 21.500" stroke="#2b2b2b" stroke-width="1.800"/><path d="M85 13 H90 M87.500 10.500 V15.500" stroke="#1a5fb4" stroke-width="1.200"/>
<circle cx="114.500" cy="13" r="4.500" stroke="#2b2b2b" stroke-width="1.300"/><path d="M118 16.500 L123 21.500" stroke="#2b2b2b" stroke-width="1.800"/><path d="M112 13 H117" stroke="#1a5fb4" stroke-width="1.200"/>
<path d="M140 22 V16 M143.500 22 V12 M147 22 V18 M150.500 22 V14" stroke="#2b2b2b" stroke-width="1.700"/><path d="M137 8 V12 H141 M137.500 11.500 C139 9 142 9 143 11" stroke="#2b2b2b" stroke-width="1.100"/>
</svg>
<div class="a" style="left:1581px;top:304px;width:306px;height:290px;background:#f5f7fd"></div>
<span class="t" style="left:1591px;top:306px;font-size:12px;font-weight:bold">诊断会话: 40 秒</span>
<!-- ruler -->
<div class="a" style="left:1581px;top:324px;width:306px;height:24px;border-top:1px solid #b4b8c4;border-bottom:1px solid #b4b8c4"></div>
<div class="a" style="left:1613px;top:325px;width:5px;height:22px;background:#000"></div>
<div class="a" style="left:1850px;top:325px;width:5px;height:22px;background:#000"></div>
<svg class="a" style="left:1581px;top:325px" width="306" height="22" viewBox="0 0 306 22"><path d="M107.500 0 V22 M233.500 0 V22" stroke="#9a9ea8"/><path d="M56.500 18 V22 M81.500 18 V22 M132.500 18 V22 M157.500 18 V22 M183.500 18 V22 M208.500 18 V22 M258.500 18 V22" stroke="#b4b8c4"/></svg>
<span class="t" style="left:1691px;top:322px;font-size:11px;color:#444">30秒</span>
<span class="t" style="left:1817px;top:322px;font-size:11px;color:#444">40秒</span>
<!-- events -->
<svg class="a" style="left:1587px;top:353px" width="9" height="9" viewBox="0 0 9 9"><path d="M8 1 V8 H1 Z" fill="#444"/></svg>
<span class="t" style="left:1598px;top:350px;font-size:12px;font-weight:bold">事件</span>
<div class="a" style="left:1599px;top:376px;width:3px;height:9px;background:#333"></div><div class="a" style="left:1605px;top:376px;width:3px;height:9px;background:#333"></div>
<div class="a" style="left:1617px;top:367px;width:234px;height:23px;border:1px solid #a3a7b3;background:#f5f7fd"></div>
<div class="a" style="left:1688px;top:367px;width:1px;height:23px;background:#a3a7b3"></div><div class="a" style="left:1814px;top:367px;width:1px;height:23px;background:#a3a7b3"></div>
<!-- memory -->
<svg class="a" style="left:1587px;top:397px" width="9" height="9" viewBox="0 0 9 9"><path d="M8 1 V8 H1 Z" fill="#444"/></svg>
<span class="t" style="left:1598px;top:394px;font-size:12px;font-weight:bold">进程内存 (MB)</span>
<svg class="a" style="left:1700px;top:395px" width="84" height="14" viewBox="0 0 84 14"><path d="M1.500 1 H8 L6.800 9 Q4.800 12 2.800 9 Z" fill="#f8b01c"/><path d="M33 1.500 H44 L38.500 10.500 Z" fill="#1a78d2"/><circle cx="75.500" cy="7" r="5.500" fill="#7cb5d3"/></svg>
<span class="t" style="left:1714px;top:394px;font-size:12px">G</span><span class="t" style="left:1746px;top:394px;font-size:12px">快.</span><span class="t" style="left:1784px;top:394px;font-size:12px">专...</span>
<div class="a" style="left:1617px;top:413px;width:234px;height:70px;border:1px solid #a3a7b3;background:#f5f7fd"></div>
<svg class="a" style="left:1617px;top:413px" width="234" height="70" viewBox="0 0 234 70"><path d="M1 69 V12.500 L56 12 L61 7.500 L68 6.500 L101 7 L107 10 L160 9.500 L203 8.500 V69 Z" fill="#a4c8dc" stroke="#8ab4cc" stroke-width=".8"/><path d="M71.500 1 V69 M197.500 1 V69" stroke="#8a9aa8"/>
<g fill="#f8b01c"><path d="M54.500 1 H60.500 L59.500 8 Q57.500 11 55.500 8 Z"/><path d="M62.500 1 H68.500 L67.500 8 Q65.500 11 63.500 8 Z"/><path d="M101 1 H107 L106 8 Q104 11 102 8 Z"/><path d="M125 1 H131 L130 8 Q128 11 126 8 Z"/><path d="M154 1 H160 L159 8 Q157 11 155 8 Z"/><path d="M165.500 1 H171.500 L170.500 8 Q168.500 11 166.500 8 Z"/></g></svg>
<span class="t" style="left:1591px;top:413px;font-size:12px">233</span><span class="t" style="left:1604px;top:468px;font-size:12px">0</span>
<span class="t" style="left:1856px;top:413px;font-size:12px">233</span><span class="t" style="left:1856px;top:468px;font-size:12px">0</span>
<!-- cpu -->
<svg class="a" style="left:1587px;top:488px" width="9" height="9" viewBox="0 0 9 9"><path d="M8 1 V8 H1 Z" fill="#444"/></svg>
<span class="t" style="left:1598px;top:485px;font-size:12px;font-weight:bold">CPU (所有处理器的百分比)</span>
<div class="a" style="left:1617px;top:502px;width:234px;height:70px;border:1px solid #a3a7b3;background:#f5f7fd"></div>
<svg class="a" style="left:1617px;top:502px" width="234" height="70" viewBox="0 0 234 70"><path d="M1 69 L10 68 L14 66.500 L18 68 L40 68.500 L46 67.500 L52 68 L58 67 L65 66.500 L69 68.500 L100 68.500 L104 67.500 L110 68.500 L120 68 L126 67 L132 68.500 L140 67.500 L146 68 L152 67 L156 65 L160 67 L164 66.500 L170 68.500 L184 68 L189 66.500 L193 68 L200 68.500 L203 69 Z" fill="#a4c8dc" stroke="#7fb0c8" stroke-width=".8"/><path d="M71.500 1 V69 M197.500 1 V69" stroke="#a0a4ae"/></svg>
<span class="t" style="left:1591px;top:502px;font-size:12px">100</span><span class="t" style="left:1604px;top:557px;font-size:12px">0</span>
<span class="t" style="left:1856px;top:502px;font-size:12px">100</span><span class="t" style="left:1856px;top:557px;font-size:12px">0</span>
<!-- lower -->
<div class="a" style="left:1581px;top:593px;width:306px;height:3px;background:#dcdde4"></div>
<div class="white" style="left:1581px;top:596px;width:306px;height:213px"></div>
<div class="a" style="left:1657px;top:600px;width:72px;height:21px;background:#dde3f5"></div>
<span class="t" style="left:1591px;top:603px;font-size:12px">摘要</span><span class="t" style="left:1627px;top:603px;font-size:12px">事件</span><span class="t" style="left:1663px;top:603px;font-size:12px">内存使用率</span><span class="t" style="left:1735px;top:603px;font-size:12px">CPU 使用率</span>
<div class="a" style="left:1581px;top:621px;width:306px;height:28px;background:#dde3f5"></div>
<div class="a" style="left:1585px;top:624px;width:76px;height:21px;background:#ccd5f0"></div>
<div class="a" style="left:1666px;top:624px;width:64px;height:21px;background:#d3daf1"></div>
<div class="a" style="left:1735px;top:624px;width:52px;height:21px;background:#d3daf1"></div>
<svg class="a" style="left:1586px;top:626px" width="18" height="16" viewBox="0 0 18 16" fill="none"><path d="M1.500 3.500 H5 L6 2 H11 L12 3.500 H16.500 V13.500 H1.500 Z" stroke="#2b2b2b" stroke-width="1.200"/><circle cx="9" cy="8.500" r="3.200" stroke="#2a8a7a" stroke-width="1.300"/></svg>
<span class="t" style="left:1606px;top:627px;font-size:12px">截取快照</span>
<svg class="a" style="left:1668px;top:626px" width="16" height="16" viewBox="0 0 16 16" fill="none"><circle cx="9.500" cy="6" r="4.200" stroke="#a8aec4" stroke-width="1.200"/><path d="M6.500 9 L1.500 14" stroke="#a8aec4" stroke-width="1.400"/></svg>
<span class="t" style="left:1687px;top:627px;font-size:12px;color:#9096ad">查看堆</span>
<svg class="a" style="left:1739px;top:628px" width="12" height="12" viewBox="0 0 12 12"><path d="M1 1 L11 11 M11 1 L1 11" stroke="#a8aec4" stroke-width="1.100"/></svg>
<span class="t" style="left:1756px;top:627px;font-size:12px;color:#9096ad">删除</span>
<div class="a" style="left:1581px;top:650px;width:306px;height:26px;background:#f5f5f5;border-top:1px solid #e2e2e2;border-bottom:1px solid #e2e2e2"></div>
<span class="t" style="left:1585px;top:655px;font-size:12px">ID</span><span class="t" style="left:1610px;top:655px;font-size:12px">时间</span><span class="t" style="left:1643px;top:655px;font-size:12px">对象(差异)</span><span class="t" style="left:1708px;top:655px;font-size:12px">堆大小(差异)</span>
<div class="a" style="left:1605px;top:651px;width:1px;height:24px;background:#dcdcdc"></div><div class="a" style="left:1638px;top:651px;width:1px;height:24px;background:#dcdcdc"></div><div class="a" style="left:1703px;top:651px;width:1px;height:24px;background:#dcdcdc"></div><div class="a" style="left:1780px;top:651px;width:1px;height:24px;background:#dcdcdc"></div>

<div class="ttl" style="left:33px;top:818px;width:919px;height:22px"><span class="t" style="font-size:12px;left:4px;top:4px">自动窗口</span></div>
<svg class="a" style="left:896px;top:818px" width="57" height="22" viewBox="0 0 57 22"><path d="M4 9.500 H12 L8 13.500 Z" fill="#d5dcf0"/><path d="M24.500 6 H29.500 M25.500 6 V11.500 M28.500 6 V11.500 M23 11.500 H31 M27 11.500 V16.500" stroke="#d5dcf0" stroke-width="1.1" fill="none"/><path d="M39.500 6.500 L48.500 15.500 M48.500 6.500 L39.500 15.500" stroke="#d5dcf0" stroke-width="1.4"/></svg>
<div class="tb" style="left:33px;top:840px;width:919px;height:25px"></div>
<div class="a" style="left:33px;top:841px;width:225px;height:22px;background:#fbfcff;border:1px solid #a3abc8"></div>
<span class="t" style="left:38px;top:845px;font-size:12px;color:#6e7490">搜索(Ctrl+E)</span>
<svg class="a" style="left:229px;top:844px" width="16" height="16" viewBox="0 0 16 16"><circle cx="9.500" cy="6" r="4" fill="none" stroke="#3a3a3a" stroke-width="1.400"/><path d="M6.500 9 L1.500 14" stroke="#3a3a3a" stroke-width="1.700"/></svg>
<div class="a" style="left:245px;top:842px;width:1px;height:20px;background:#8e9bbf"></div><div class="arr" style="left:248px;top:850px"></div>
<svg class="a" style="left:264px;top:846px" width="40" height="13" viewBox="0 0 40 13" fill="none" stroke="#a3abc6" stroke-width="1.200"><path d="M14 6.500 H2 M6.500 2 L2 6.500 L6.500 11"/><path d="M25 6.500 H37 M32.500 2 L37 6.500 L32.500 11"/></svg>
<span class="t g" style="left:309px;top:845px;font-size:12px">搜索深度:</span>
<div class="combo dis" style="left:366px;top:843px;width:40px;height:21px"></div><div class="arr gr" style="left:395px;top:852px"></div>
<div class="white" style="left:33px;top:865px;width:919px;height:122px"></div>
<div class="a" style="left:33px;top:887px;width:903px;height:1px;background:#dfe3ee"></div>
<div class="a" style="left:41px;top:866px;width:1px;height:21px;background:#e4e7f0"></div>
<div class="a" style="left:340px;top:866px;width:1px;height:21px;background:#e4e7f0"></div>
<div class="a" style="left:786px;top:866px;width:1px;height:21px;background:#e4e7f0"></div>
<span class="t" style="left:47px;top:869px;font-size:12px;color:#9a9eb0">名称</span>
<span class="t" style="left:345px;top:869px;font-size:12px;color:#9a9eb0">值</span>
<span class="t" style="left:792px;top:869px;font-size:12px;color:#9a9eb0">类型</span>
<div class="a" style="left:936px;top:865px;width:16px;height:122px;background:#f4f5f9"></div>
<svg class="a" style="left:939px;top:871px" width="11" height="8" viewBox="0 0 11 8"><path d="M1 6.500 H10 L5.500 1.500 Z" fill="#c5c7d0"/></svg>
<svg class="a" style="left:939px;top:974px" width="11" height="8" viewBox="0 0 11 8"><path d="M1 1.500 H10 L5.500 6.500 Z" fill="#c5c7d0"/></svg>
<div class="bt on" style="left:33px;width:58px">自动窗口</div>
<div class="bt" style="left:92px;width:59px">局部变量</div>
<div class="bt" style="left:153px;width:45px">监视 1</div>
<div class="ttl" style="left:961px;top:818px;width:926px;height:22px"><span class="t" style="font-size:12px;left:4px;top:4px">错误列表</span></div>
<svg class="a" style="left:1830px;top:818px" width="57" height="22" viewBox="0 0 57 22"><path d="M4 9.500 H12 L8 13.500 Z" fill="#d5dcf0"/><path d="M24.500 6 H29.500 M25.500 6 V11.500 M28.500 6 V11.500 M23 11.500 H31 M27 11.500 V16.500" stroke="#d5dcf0" stroke-width="1.1" fill="none"/><path d="M39.500 6.500 L48.500 15.500 M48.500 6.500 L39.500 15.500" stroke="#d5dcf0" stroke-width="1.4"/></svg>
<div class="tb" style="left:961px;top:840px;width:926px;height:26px"></div>
<div class="combo" style="left:968px;top:843px;width:150px;height:21px;background:#f3f5fc;border-color:#8e9bbf"></div><span class="t" style="left:972px;top:846px;font-size:12px;word-spacing:1px">整个解决方案</span><div class="arr" style="left:1107px;top:852px"></div>
<div class="sep" style="left:1124px;top:845px;height:17px;background:#a9b4d4"></div>
<div class="sep" style="left:1199px;top:845px;height:17px;background:#a9b4d4"></div>
<div class="sep" style="left:1363px;top:845px;height:17px;background:#a9b4d4"></div>
<div class="sep" style="left:1534px;top:845px;height:17px;background:#a9b4d4"></div>
<div class="sep" style="left:1567px;top:845px;height:17px;background:#a9b4d4"></div>
<div class="a" style="left:1129px;top:842px;width:66px;height:22px;background:#fdf0c8;border:1px solid #e5c365"></div>
<svg class="a" style="left:1132px;top:846px" width="14" height="14" viewBox="0 0 14 14"><circle cx="7" cy="7" r="6.500" fill="#d8262c"/><path d="M4.200 4.200 L9.800 9.800 M9.800 4.200 L4.200 9.800" stroke="#fff" stroke-width="1.600"/></svg>
<span class="t" style="left:1151px;top:846px;font-size:12px;word-spacing:1px">错误 0</span>
<svg class="a" style="left:1205px;top:846px" width="16" height="14" viewBox="0 0 16 14"><path d="M8 .5 L15.500 13.500 H.5 Z" fill="#b8860b"/><path d="M8 4.500 V9.500 M8 10.800 V12.300" stroke="#1e1e1e" stroke-width="1.500"/></svg>
<span class="t" style="left:1226px;top:846px;font-size:12px;word-spacing:1px">展示 1 个警告中的 0 个</span>
<svg class="a" style="left:1371px;top:846px" width="14" height="14" viewBox="0 0 14 14"><circle cx="7" cy="7" r="6.500" fill="#1a5fb4"/><path d="M7 6 V11 M7 3 V4.600" stroke="#fff" stroke-width="1.600"/></svg>
<span class="t" style="left:1390px;top:846px;font-size:12px;word-spacing:1px">展示 10 个消息中的 0 个</span>
<div class="a" style="left:1540px;top:842px;width:22px;height:22px;background:#fdf0c8;border:1px solid #e5c365"></div>
<svg class="a" style="left:1542px;top:844px" width="18" height="18" viewBox="0 0 18 18"><circle cx="5.500" cy="5.500" r="4" fill="#d8262c"/><path d="M3.800 3.800 L7.200 7.200 M7.200 3.800 L3.800 7.200" stroke="#fff" stroke-width="1.100"/><path d="M8.500 8.500 H16.500 L13.500 12 V16.500 L11.500 15.500 V12 Z" fill="none" stroke="#1e1e1e" stroke-width="1.100"/></svg>
<div class="combo" style="left:1573px;top:843px;width:150px;height:21px;background:#f3f5fc;border-color:#8e9bbf"></div><span class="t" style="left:1577px;top:846px;font-size:12px;word-spacing:1px">生成 + IntelliSense</span><div class="arr" style="left:1712px;top:852px"></div>
<div class="a" style="left:1730px;top:842px;width:156px;height:22px;background:#fbfcff;border:1px solid #a3abc8"></div>
<span class="t" style="left:1735px;top:845px;font-size:12px;color:#8a8fa3">搜索错误列表</span>
<svg class="a" style="left:1858px;top:844px" width="16" height="16" viewBox="0 0 16 16"><circle cx="9.500" cy="6" r="4" fill="none" stroke="#3a3a3a" stroke-width="1.400"/><path d="M6.500 9 L1.500 14" stroke="#3a3a3a" stroke-width="1.700"/></svg>
<div class="a" style="left:1874px;top:843px;width:1px;height:20px;background:#8e9bbf"></div><div class="arr" style="left:1877px;top:850px"></div>
<div class="white" style="left:961px;top:866px;width:926px;height:121px"></div>
<div class="a" style="left:961px;top:866px;width:926px;height:23px;background:#f9f9fd;border-bottom:1px solid #d9dce8"></div>
<div class="a" style="left:988px;top:867px;width:1px;height:21px;background:#dfe2ec"></div>
<div class="a" style="left:1064px;top:867px;width:1px;height:21px;background:#dfe2ec"></div>
<div class="a" style="left:1402px;top:867px;width:1px;height:21px;background:#dfe2ec"></div>
<div class="a" style="left:1552px;top:867px;width:1px;height:21px;background:#dfe2ec"></div>
<div class="a" style="left:1702px;top:867px;width:1px;height:21px;background:#dfe2ec"></div>
<div class="a" style="left:1737px;top:867px;width:1px;height:21px;background:#dfe2ec"></div>
<div class="a" style="left:1862px;top:867px;width:1px;height:21px;background:#dfe2ec"></div>
<svg class="a" style="left:1002px;top:869px" width="9" height="9" viewBox="0 0 9 9"><path d="M1 1.500 H8 M3 3.500 H8 M5.500 5.500 H8 M7.500 1.500 V8" stroke="#555" stroke-width=".9" fill="none"/></svg>
<span class="t" style="left:1018px;top:871px;font-size:12px">代码</span>
<span class="t" style="left:1068px;top:871px;font-size:12px">说明</span>
<span class="t" style="left:1406px;top:871px;font-size:12px">项目</span>
<span class="t" style="left:1556px;top:871px;font-size:12px">文件</span>
<span class="t" style="left:1706px;top:871px;font-size:12px">行</span>
<span class="t" style="left:1741px;top:871px;font-size:12px">禁止显示状态</span>
<svg class="a" style="left:1100px;top:874px" width="10" height="7" viewBox="0 0 10 7"><path d="M.5 1 H9.500 L5 6 Z" fill="#1e1e1e"/></svg>
<div class="bt" style="left:961px;width:94px">辅助功能检查器</div>
<div class="bt" style="left:1057px;width:96px">XAML 绑定失败</div>
<div class="bt" style="left:1155px;width:58px">调用堆栈</div>
<div class="bt" style="left:1215px;width:34px">断点</div>
<div class="bt" style="left:1251px;width:58px">异常设置</div>
<div class="bt" style="left:1311px;width:58px">命令窗口</div>
<div class="bt" style="left:1371px;width:58px">即时窗口</div>
<div class="bt" style="left:1431px;width:34px">输出</div>
<div class="bt on" style="left:1467px;width:58px">错误列表</div>

<div id="status" class="a">
<svg class="a" style="left:0;top:0" width="24" height="25" viewBox="0 0 24 25"><path d="M4.500 4.500 H19.500 V16.500 H15 L12 19.500 L9 16.500 H4.500 Z" fill="none" stroke="#fff" stroke-width="1.200"/></svg>
<span class="t" style="left:27px;font-size:12.5px">就绪</span>
<svg class="a" style="left:1572px;top:6px" width="14" height="15" viewBox="0 0 14 15" fill="none" stroke="#fff" stroke-width="1.200"><path d="M4 13 V1.500 M1.500 4 L4 1.500 L6.500 4 M10 1.500 V13 M7.500 10.500 L10 13 L12.500 10.500"/></svg>
<span class="t" style="left:1592px">0 / 0</span>
<svg class="a" style="left:1626px;top:10px" width="9" height="6" viewBox="0 0 9 6"><path d="M0 5.500 H9 L4.500 .5 Z" fill="#fff"/></svg>
<svg class="a" style="left:1657px;top:5px" width="16" height="16" viewBox="0 0 16 16" fill="none" stroke="#fff" stroke-width="1.200"><path d="M2 14 L3 10.500 L11.500 2 L14 4.500 L5.500 13 Z"/></svg>
<span class="t" style="left:1678px">1</span>
<svg class="a" style="left:1707px;top:4px" width="16" height="18" viewBox="0 0 16 18" fill="none" stroke="#fff" stroke-width="1.200"><circle cx="4" cy="3.500" r="2"/><circle cx="4" cy="14.500" r="2"/><circle cx="12" cy="5.500" r="2"/><path d="M4 5.500 V12.500 M12 7.500 C12 10.500 4 9.500 4 12.500"/></svg>
<span class="t" style="left:1729px">main</span>
<svg class="a" style="left:1762px;top:10px" width="9" height="6" viewBox="0 0 9 6"><path d="M0 5.500 H9 L4.500 .5 Z" fill="#fff"/></svg>
<svg class="a" style="left:1799px;top:5px" width="18" height="17" viewBox="0 0 18 17" fill="none" stroke="#fff" stroke-width="1.200"><path d="M1.500 1.500 H14.500 V6 M1.500 1.500 V4.500 H14.500 M3.500 4.500 V13.500 H9 M6.500 4.500 V13.500"/><circle cx="13" cy="11.500" r="3.500" fill="#fff"/><path d="M13 13.500 V9.500 M11.500 11 L13 9.500 L14.500 11" stroke="#a24b40"/></svg>
<span class="t" style="left:1821px">VPet</span>
<svg class="a" style="left:1853px;top:10px" width="9" height="6" viewBox="0 0 9 6"><path d="M0 5.500 H9 L4.500 .5 Z" fill="#fff"/></svg>
<svg class="a" style="left:1883px;top:3px" width="22" height="22" viewBox="0 0 22 22" fill="none"><path d="M2.500 14.500 C4.500 12.500 3.500 6 8.500 4.500 C13.500 6 12.500 12.500 14.500 14.500 Z M7 17 H10" stroke="#fff" stroke-width="1.200"/><circle cx="15" cy="15" r="5" fill="#fff"/><path d="M15 12.500 V18" stroke="#222" stroke-width="1.400"/></svg>
</div>

<div id="dlg" class="a">
<div class="a" style="left:0;top:0;width:600px;height:35px;background:#039be5"></div>
<span class="t" style="left:10.0px;top:5.6px;font-size:17.40px;line-height:24px;height:24px;color:#fff">Settings</span>
<svg class="a" style="left:571px;top:8px" width="18" height="18" viewBox="0 0 18 18"><path d="M1.500 1.500 L16.500 16.500 M16.500 1.500 L1.500 16.500" stroke="#fff" stroke-width="1.500"/></svg>
<div class="a" style="left:282px;top:0;width:36px;height:13px;background:#d3d8f2;border:1px solid #5a6db0"></div><div class="a" style="left:287px;top:4px;width:26px;height:1px;background:#3a4a88"></div><div class="a" style="left:287px;top:7px;width:26px;height:1px;background:#3a4a88"></div>
<svg class="a" style="left:12px;top:50px" width="12" height="16" viewBox="0 0 12 16"><path d="M9.500 1.500 L2.500 8 L9.500 14.500" fill="none" stroke="#333" stroke-width="1.300"/></svg>
<svg class="a" style="left:576px;top:50px" width="12" height="16" viewBox="0 0 12 16"><path d="M2.500 1.500 L9.500 8 L2.500 14.500" fill="none" stroke="#333" stroke-width="1.300"/></svg>
<div class="a" style="left:194px;top:40px;width:80px;height:35px;background:#5cbcec;border-radius:4px"></div>
<span class="t" style="left:41.0px;top:45.8px;font-size:16.70px;line-height:24px;height:24px">Graphics</span>
<span class="t" style="left:128.2px;top:45.8px;font-size:16.70px;line-height:24px;height:24px">System</span>
<span class="t" style="left:204.0px;top:45.8px;font-size:17.60px;line-height:24px;height:24px;color:#fff">Interact</span>
<span class="t" style="left:283.8px;top:45.8px;font-size:15.80px;line-height:24px;height:24px">DIY</span>
<span class="t" style="left:330.0px;top:45.8px;font-size:17.20px;line-height:24px;height:24px">Diagnostic</span>
<span class="t" style="left:431.0px;top:45.8px;font-size:16.95px;line-height:24px;height:24px">MOD Managemen</span>
<div class="a" style="left:0;top:96px;width:562px;height:434px;overflow:hidden"><div class="a" style="left:0;top:-96px;width:600px;height:550px">
<span class="t" style="left:27.0px;top:77.5px;font-size:17.00px;line-height:24px;height:24px">Computing Interval</span>
<div class="trk" style="left:198.0px;top:90.0px;width:294.0px"><i style="width:60.5px"></i></div>
<div class="knob" style="left:249.0px;top:81.5px"></div>
<span class="t" style="left:27.0px;top:113.0px;font-size:17.16px;line-height:24px;height:24px">Interaction Cycles</span>
<div class="trk" style="left:198.3px;top:124.0px;width:294.4px"><i style="width:63.6px"></i></div>
<div class="knob" style="left:252.4px;top:115.5px"></div>
<span class="t b" style="left:503.4px;top:113.0px;font-size:20.00px;line-height:24px;height:24px">220</span>
<span class="t" style="left:198.0px;top:139.4px;font-size:15.25px;line-height:24px;height:24px;white-space:pre">Calculate data calculations  4.00  per minute</span>
<span class="t" style="left:198.0px;top:157.9px;font-size:15.25px;line-height:24px;height:24px;white-space:pre">Proactively engage in interaction  8.35  per minute</span>
<span class="t" style="left:27.0px;top:183.0px;font-size:17.13px;line-height:24px;height:24px">Pet Moving</span>
<div class="a" style="left:208px;top:186px;width:35px;height:18px;border-radius:9px;background:#6ccaf6"></div><div class="a" style="left:227px;top:188px;width:14px;height:14px;border-radius:50%;background:#fff"></div>
<span class="t" style="left:247.7px;top:183.0px;font-size:16.70px;line-height:24px;height:24px">Enabled</span>
<div class="a" style="left:389.700px;top:186px;width:35px;height:18px;border-radius:9px;background:#fff;border:1.500px solid #4db5eb"></div><div class="a" style="left:391.700px;top:187.700px;width:14.500px;height:14.500px;border-radius:50%;background:#4db5eb"></div>
<span class="t" style="left:429.8px;top:183.0px;font-size:17.38px;line-height:24px;height:24px">Smart Moving</span>
<span class="t" style="left:198.0px;top:211.0px;font-size:17.21px;line-height:24px;height:24px">Smart Moving Judgmen</span>
</div></div>
<div class="a" style="left:380.300px;top:215.500px;width:182px;height:29px;border:2px solid #8fd0f5;border-radius:5px;background:#fff"></div>
<span class="t" style="left:389.0px;top:219.0px;font-size:15.26px;line-height:24px;height:24px;color:#b4b4b4">20 minute</span>
<svg class="a" style="left:543px;top:227px" width="11" height="7" viewBox="0 0 11 7"><path d="M.5 .5 H10.500 L5.500 6.500 Z" fill="#8a8a8a"/></svg>
<div class="a" style="left:563px;top:202px;width:10px;height:311px;background:#c1c1c1"></div>
<div class="a" style="left:0;top:96px;width:562px;height:434px;overflow:hidden"><div class="a" style="left:0;top:-96px;width:600px;height:550px">
<span class="t" style="left:27.0px;top:257.2px;font-size:20.20px;line-height:24px;height:24px;color:#111">Operation Settings</span>
<span class="t" style="left:27.0px;top:280.5px;font-size:17.11px;line-height:24px;height:24px">Game Operation Related Settings</span>
<span class="t" style="left:27.0px;top:308.0px;font-size:16.88px;line-height:24px;height:24px">Long Press Interval</span>
<div class="trk" style="left:187.6px;top:319.0px;width:297.1px"><i style="width:23.6px"></i></div>
<div class="knob" style="left:201.7px;top:310.5px"></div>
<span class="t b" style="left:494.7px;top:308.0px;font-size:17.48px;line-height:24px;height:24px">0.29 Sec</span>
<span class="t" style="left:27.0px;top:342.8px;font-size:16.94px;line-height:24px;height:24px">Desktop Pet Name</span>
<div class="a" style="left:188px;top:340.300px;width:374px;height:29.500px;border:2px solid #0a96e4;border-radius:6px;background:#fff"></div>
<span class="t" style="left:199.2px;top:343.8px;font-size:16.04px;line-height:24px;height:24px">Lolis</span>
<span class="t" style="left:27.0px;top:377.3px;font-size:19.90px;line-height:24px;height:24px;color:#111">Music Recognition Settings</span>
<span class="t" style="left:27.0px;top:400.3px;font-size:17.32px;line-height:24px;height:24px">Set the threshold for recognizing special music playback actions.</span>
<span class="t" style="left:27.0px;top:421.0px;font-size:17.10px;line-height:24px;height:24px">Current playback volume: 0.00%</span>
<span class="t" style="left:27.0px;top:448.7px;font-size:16.96px;line-height:24px;height:24px">Trigger volume</span>
<div class="trk" style="left:154.7px;top:459.7px;width:355.2px"><i style="width:110.1px"></i></div>
<div class="knob" style="left:255.3px;top:451.2px"></div>
<span class="t b" style="left:0.0px;top:448.7px;font-size:19.50px;line-height:24px;height:24px;left:auto;right:38px">30%</span>
<span class="t" style="left:27.0px;top:483.6px;font-size:16.87px;line-height:24px;height:24px">Climax Volume</span>
<div class="trk" style="left:154.7px;top:494.6px;width:355.2px"><i style="width:225.3px"></i></div>
<div class="knob" style="left:370.5px;top:486.1px"></div>
<span class="t b" style="left:0.0px;top:483.6px;font-size:19.50px;line-height:24px;height:24px;left:auto;right:38px">75%</span>
</div></div>
<span class="t" style="left:4.5px;top:526.8px;font-size:10.73px;line-height:24px;height:24px;color:#3aa03a">Game version v0.90 x64</span>
</div>

<svg class="a" style="left:300px;top:360px" width="220" height="160" viewBox="0 0 1430 1040" stroke-linejoin="round" stroke-linecap="round">
<g stroke="#111" stroke-width="9.500">
<!-- back leg -->
<path d="M1050 570 L1150 500 L1240 545 L1120 625 Z" fill="#f0a58e" stroke="none"/>
<path d="M1150 505 C1190 480 1230 495 1262 530 L1342 635 C1352 668 1330 682 1298 670 L1108 612 Z" fill="#e9edf8"/>
<path d="M1322 612 L1344 640 C1352 668 1332 682 1300 671 Z" fill="#8fa0d2" stroke-width="4"/>
<!-- skirt -->
<path d="M1000 180 C1060 185 1105 215 1130 268 L1140 300 C1165 325 1172 350 1165 385 L1160 425 C1166 455 1160 480 1140 505 C1120 545 1090 575 1055 592 L990 560 L1075 330 Z" fill="#b4524e" stroke="#5e2424" stroke-width="4"/>
<path d="M1040 215 L1125 270 M1085 300 L1165 345 M1090 400 L1160 430 M1075 470 L1138 508" stroke="#8a3636" stroke-width="10" fill="none"/>
<path d="M1105 330 L1165 385 L1160 425 L1095 395 Z M1085 440 L1140 505 L1055 592 L1030 560 Z" fill="#923c3c" stroke="none"/>
<!-- lower leg -->
<path d="M872 770 L962 715 C968 780 952 850 940 902 L848 878 C850 838 860 800 872 770 Z" fill="#e9edf8"/>
<path d="M842 868 L942 898 L936 922 L834 892 Z" fill="#8fa0d2" stroke-width="4"/>
<!-- body -->
<path d="M700 215 C760 170 820 130 880 105 C930 112 980 150 1010 185 C1080 260 1102 380 1082 480 C1070 545 1040 600 990 652 C960 692 930 722 900 742 L780 702 C758 640 760 560 790 500 Z" fill="#fff"/>
<path d="M820 150 C800 180 790 215 800 260 M870 140 C850 180 830 225 820 262 M905 130 C960 190 1030 250 1075 330" fill="none" stroke-width="4"/>
<g fill="none" stroke="#f6bcbc" stroke-width="4"><path d="M760 200 C800 230 840 260 860 300"/><path d="M940 160 C990 230 1040 300 1060 380"/><path d="M1000 320 C960 340 930 360 905 395 C870 440 850 500 860 570"/><path d="M1075 420 C1000 440 950 500 940 600"/><path d="M1040 560 C1000 580 980 620 975 660"/><path d="M790 560 C800 620 830 670 870 700"/></g>
<path d="M828 268 C880 300 940 360 972 450 C930 420 890 420 850 440" fill="#fff" stroke-width="4"/>
<!-- chest / left body -->
<path d="M196 600 L420 600 L790 640 L800 712 L608 741 L446 865 L375 812 C330 810 262 794 221 730 L196 700 Z" fill="#fff"/>
<path d="M446 869 L472 790 L607 741 C606 765 597 785 585 797 L551 835 L540 827 L536 846 Z" fill="#dfeaf7" stroke-width="6"/>
<g fill="none" stroke="#f6bcbc" stroke-width="4"><path d="M250 720 C320 760 400 770 470 750"/><path d="M300 650 C360 670 400 680 440 690"/></g>
<!-- left arm -->
<path d="M398 560 C330 560 262 570 200 590 L204 700 C260 730 330 712 402 672 Z" fill="#fff" stroke="none"/><path d="M398 560 C330 560 262 570 200 590" fill="none"/>
<path d="M220 640 C280 650 340 640 390 620" fill="none" stroke="#f6bcbc" stroke-width="4"/>
<path d="M150 584 C112 584 90 625 92 668 C94 712 120 744 156 742 C192 740 206 700 204 660 C202 618 188 584 150 584 Z" fill="#fde8e2"/>
<path d="M172 592 C150 600 142 620 152 640" fill="none" stroke-width="5"/>
<!-- hair back -->
<path d="M300 500 C320 380 420 232 600 190 C760 178 880 300 962 452 C900 420 860 440 830 470 L800 560 L700 620 L400 620 L340 592 L280 545 Z" fill="#b4b4b4"/>
<!-- long strands -->
<path d="M398 630 C400 740 372 850 338 942 C372 920 392 900 412 880 L405 905 C452 840 472 760 492 690 L490 630 Z" fill="#b4b4b4"/>
<path d="M700 600 C722 720 702 850 664 952 C690 935 712 915 735 890 L730 912 C790 840 808 760 808 690 C810 620 785 560 762 520 Z" fill="#b4b4b4"/>
<!-- face -->
<path d="M385 600 C380 560 440 520 560 515 C680 510 745 550 742 600 C738 660 640 695 560 695 C470 695 390 660 385 600 Z" fill="#fdece6"/>
<ellipse cx="425" cy="615" rx="28" ry="14" fill="#f9c8c2" stroke="none"/><ellipse cx="690" cy="595" rx="28" ry="14" fill="#f9c8c2" stroke="none"/>
<path d="M400 582 Q440 550 482 578 M405 592 L398 600 M580 562 Q626 534 672 560 M675 570 L684 578" fill="none" stroke-width="6"/>
<path d="M520 626 Q555 608 588 624 Q582 672 550 672 Q524 666 520 626 Z" fill="#e9657b" stroke-width="5"/>
<path d="M532 652 Q552 640 574 652 Q566 670 550 670 Q538 668 532 652 Z" fill="#f7a7b0" stroke="none"/>
<!-- bangs -->
<path d="M300 500 C330 360 440 230 600 192 C740 185 850 270 900 360 C880 420 820 470 765 520 C760 560 750 590 742 600 C735 560 720 530 700 500 C705 540 700 570 690 585 C670 540 640 480 600 420 C590 470 575 520 560 562 C540 540 510 520 480 500 C480 530 475 555 470 572 C450 520 440 480 435 440 C420 500 400 550 345 598 C335 580 340 560 345 545 L282 548 C290 530 296 515 300 500 Z" fill="#b4b4b4"/>
<path d="M470 330 C450 380 440 420 435 440 M610 330 C600 370 598 400 600 420 M600 420 C640 450 670 480 700 500" fill="none" stroke-width="4"/>
<!-- ahoge -->
<path d="M505 215 C462 150 492 82 556 66 C522 102 512 160 542 205 Z" fill="#b4b4b4"/>
<g fill="#fff" stroke="none"><circle cx="520" cy="302" r="11"/><circle cx="556" cy="300" r="10"/><circle cx="645" cy="282" r="10"/><circle cx="666" cy="266" r="9"/></g>
<!-- hairpin -->
<path d="M733 318 L760 306 L806 452 L778 480 Z" fill="#edbb58" stroke="#7a4a12" stroke-width="4"/>
<path d="M778 480 L800 440 L815 432 L808 408 L830 400 L842 440 L800 472 Z" fill="#c88a3a" stroke="#7a4a12" stroke-width="4"/>
<!-- right sleeve & fist -->
<path d="M770 520 C800 600 850 640 940 650 C960 690 950 720 900 742 L790 705 C760 640 755 580 770 520 Z" fill="#fff" stroke-width="5"/>
<path d="M850 630 C812 632 790 660 794 695 C798 730 828 752 862 748 C896 744 918 716 912 682 C906 650 884 628 850 630 Z" fill="#fde8e2"/>
<path d="M800 680 C815 672 830 675 838 690 M838 690 C835 710 840 725 850 735" fill="none" stroke-width="4"/>
</g>
</svg>
<div class="a" style="left:398px;top:313px;width:36px;height:13px;background:#d3d8f2;border:1px solid #5a6db0"></div><div class="a" style="left:403px;top:317px;width:26px;height:1px;background:#3a4a88"></div><div class="a" style="left:403px;top:320px;width:26px;height:1px;background:#3a4a88"></div>

</body>
</html>
